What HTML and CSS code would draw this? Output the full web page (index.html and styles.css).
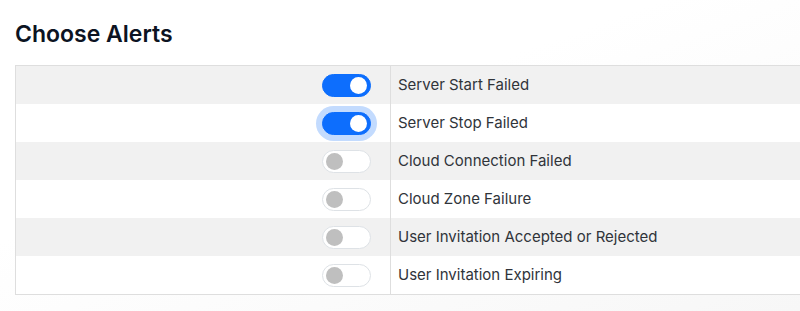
FILE: index.html
```html
<!DOCTYPE html>
<html lang="en">
<head>
    <meta charset="UTF-8">
    <meta name="viewport" content="width=device-width, initial-scale=1.0">
    <title>Choose Alerts</title>
    <link rel="stylesheet" href="styles.css">
</head>
<body>
    <div class="page">
        <h1>Choose Alerts</h1>

        <table class="alerts">
            <tr>
                <td class="switch-cell"><span class="switch on"></span></td>
                <td class="label-cell">Server Start Failed</td>
            </tr>
            <tr>
                <td class="switch-cell"><span class="switch on focused"></span></td>
                <td class="label-cell">Server Stop Failed</td>
            </tr>
            <tr>
                <td class="switch-cell"><span class="switch"></span></td>
                <td class="label-cell">Cloud Connection Failed</td>
            </tr>
            <tr>
                <td class="switch-cell"><span class="switch"></span></td>
                <td class="label-cell">Cloud Zone Failure</td>
            </tr>
            <tr>
                <td class="switch-cell"><span class="switch"></span></td>
                <td class="label-cell">User Invitation Accepted or Rejected</td>
            </tr>
            <tr>
                <td class="switch-cell"><span class="switch"></span></td>
                <td class="label-cell">User Invitation Expiring</td>
            </tr>
        </table>
    </div>
</body>
</html>
```

FILE: styles.css
```css
body {
    margin: 0;
    padding: 0;
    font-family: 'Inter', 'Liberation Sans', sans-serif;
    background: linear-gradient(160deg, #ffffff 40%, #f7f7f7 100%);
    overflow: hidden;
    height: 100vh;
}

.page {
    padding: 20px 0 0 15px;
}

h1 {
    margin: 0 0 17px 0;
    font-size: 23px;
    line-height: 28px;
    font-weight: 600;
    color: #0c1322;
}

.alerts {
    width: 820px;
    border-collapse: separate;
    border-spacing: 0;
    border: 1px solid #dedede;
    font-size: 15px;
    color: #30343a;
}

.alerts tr {
    height: 38px;
}

.alerts tr:nth-child(odd) {
    background: #f1f1f1;
}

.alerts tr:nth-child(even) {
    background: #ffffff;
}

.alerts td {
    padding: 0;
    vertical-align: middle;
}

.switch-cell {
    width: 355px;
    text-align: right;
    padding-right: 19px !important;
    border-right: 1px solid #dedede;
}

.label-cell {
    padding-left: 7px !important;
    padding-bottom: 1px !important;
}

.switch {
    display: inline-block;
    position: relative;
    box-sizing: border-box;
    width: 49px;
    height: 23px;
    border-radius: 12px;
    border: 1px solid #dee2e6;
    background: #ffffff;
    vertical-align: middle;
}

.switch::after {
    content: '';
    position: absolute;
    top: 2px;
    left: 3px;
    width: 17px;
    height: 17px;
    border-radius: 50%;
    background: #bfbfbf;
}

.switch.on {
    background: #0d6efd;
    border-color: #0d6efd;
}

.switch.on::after {
    left: auto;
    right: 3px;
    background: #ffffff;
}

.switch.focused {
    box-shadow: 0 0 0 6px #c3dbfe;
}
```
